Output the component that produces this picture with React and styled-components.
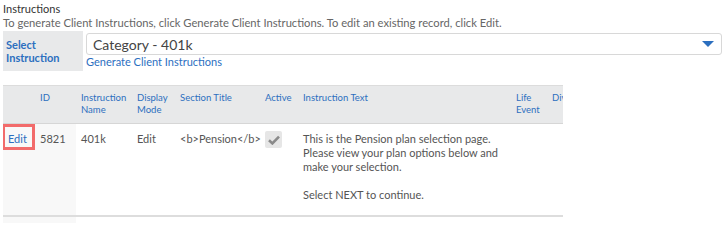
import React from "react";
import styled, { createGlobalStyle } from "styled-components";

const GlobalStyle = createGlobalStyle`
  html, body {
    margin: 0;
    padding: 0;
    background: #ffffff;
    font-family: "Lato", "Open Sans", sans-serif;
  }
`;

const Page = styled.div`
  width: 725px;
  height: 223px;
  overflow: hidden;
  padding: 2px 3px 0 3px;
  box-sizing: border-box;
`;

const Title = styled.div`
  font-size: 11px;
  line-height: 14px;
  color: #333;
`;

const Hint = styled.div`
  font-size: 11.2px;
  line-height: 14px;
  color: #666;
  margin-top: 0px;
`;

const SelectRow = styled.div`
  display: flex;
  margin-top: 1px;
  height: 40px;
`;

const SelectLabel = styled.div`
  width: 80px;
  background: #e8e9ea;
  color: #2c6fbf;
  font-weight: 700;
  font-size: 11px;
  line-height: 13px;
  padding: 7px 0 0 3px;
  box-sizing: border-box;
`;

const SelectCol = styled.div`
  flex: 1;
  margin-left: 3px;
  padding-top: 2px;
`;

const SelectBox = styled.div`
  height: 22px;
  border: 1px solid #d8d8d8;
  border-radius: 3px;
  box-sizing: border-box;
  display: flex;
  align-items: center;
  justify-content: space-between;
  padding: 0 7px 0 6px;
  font-size: 14px;
  color: #444;
`;

const Caret = styled.span`
  width: 0;
  height: 0;
  border-left: 6px solid transparent;
  border-right: 6px solid transparent;
  border-top: 6px solid #2c6fbf;
`;

const Link = styled.a`
  display: block;
  color: #2c6fbf;
  font-size: 11px;
  line-height: 14px;
  text-decoration: none;
`;

const TableWrap = styled.div`
  width: 560px;
  overflow: hidden;
  margin-top: 14px;
`;

const Table = styled.table`
  border-collapse: collapse;
  table-layout: fixed;
  width: 620px;
`;

const Th = styled.th`
  background: #e8e9ea;
  color: #2c6fbf;
  font-weight: 400;
  font-size: 9.5px;
  line-height: 12px;
  text-align: left;
  vertical-align: top;
  padding: 6px 5px 7px 5px;
  border-top: 1px solid #dcdcdc;
  border-bottom: 1px solid #d6d6d6;
`;

const Td = styled.td`
  background: ${({ $shade }) => ($shade ? "#f8f8f8" : "#ffffff")};
  color: #555;
  font-size: 11px;
  line-height: 14px;
  vertical-align: top;
  padding: ${({ $flush }) => ($flush ? "0" : "8px 5px 13px 5px")};
  border-bottom: 2px solid #dddddd;
`;

const EditLink = styled.a`
  display: block;
  width: 33px;
  height: 26px;
  box-sizing: border-box;
  margin-left: -1px;
  padding: 5px 0 0 3px;
  font-size: 11px;
  line-height: 14px;
  color: #2c6fbf;
  text-decoration: none;
  border: 3px solid #f26b6b;
`;

const Check = styled.span`
  display: inline-flex;
  align-items: center;
  justify-content: center;
  width: 17px;
  height: 17px;
  border-radius: 2px;
  background: #e6e6e6;
  margin-top: -1px;
`;

const Para = styled.p`
  margin: 0;
  & + & {
    margin-top: 14px;
  }
`;

const widths = [32, 41, 56, 43, 85, 38, 213, 36, 76];

export default function App() {
  return (
    <Page>
      <GlobalStyle />
      <Title>Instructions</Title>
      <Hint>
        To generate Client Instructions, click Generate Client Instructions. To
        edit an existing record, click Edit.
      </Hint>
      <SelectRow>
        <SelectLabel>
          Select
          <br />
          Instruction
        </SelectLabel>
        <SelectCol>
          <SelectBox>
            <span>Category - 401k</span>
            <Caret />
          </SelectBox>
          <Link href="#">Generate Client Instructions</Link>
        </SelectCol>
      </SelectRow>
      <TableWrap>
        <Table>
          <colgroup>
            {widths.map((w, i) => (
              <col key={i} style={{ width: w }} />
            ))}
          </colgroup>
          <thead>
            <tr>
              <Th></Th>
              <Th>ID</Th>
              <Th>Instruction Name</Th>
              <Th>Display Mode</Th>
              <Th>Section Title</Th>
              <Th>Active</Th>
              <Th>Instruction Text</Th>
              <Th>Life Event</Th>
              <Th>Divisions</Th>
            </tr>
          </thead>
          <tbody>
            <tr>
              <Td $shade $flush>
                <EditLink href="#">Edit</EditLink>
              </Td>
              <Td $shade>5821</Td>
              <Td>401k</Td>
              <Td>Edit</Td>
              <Td>&lt;b&gt;Pension&lt;/b&gt;</Td>
              <Td>
                <Check>
                  <svg width="12" height="10" viewBox="0 0 12 10">
                    <path
                      d="M1 5.2 L4.4 8.4 L11 1.6"
                      fill="none"
                      stroke="#8a8a8a"
                      strokeWidth="2.6"
                    />
                  </svg>
                </Check>
              </Td>
              <Td>
                <Para>
                  This is the Pension plan selection page. Please view your
                  plan options below and make your selection.
                </Para>
                <Para>Select NEXT to continue.</Para>
              </Td>
              <Td></Td>
              <Td></Td>
            </tr>
            <tr>
              <Td $shade>&nbsp;</Td>
              <Td $shade></Td>
              <Td></Td>
              <Td></Td>
              <Td></Td>
              <Td></Td>
              <Td></Td>
              <Td></Td>
              <Td></Td>
            </tr>
          </tbody>
        </Table>
      </TableWrap>
    </Page>
  );
}
